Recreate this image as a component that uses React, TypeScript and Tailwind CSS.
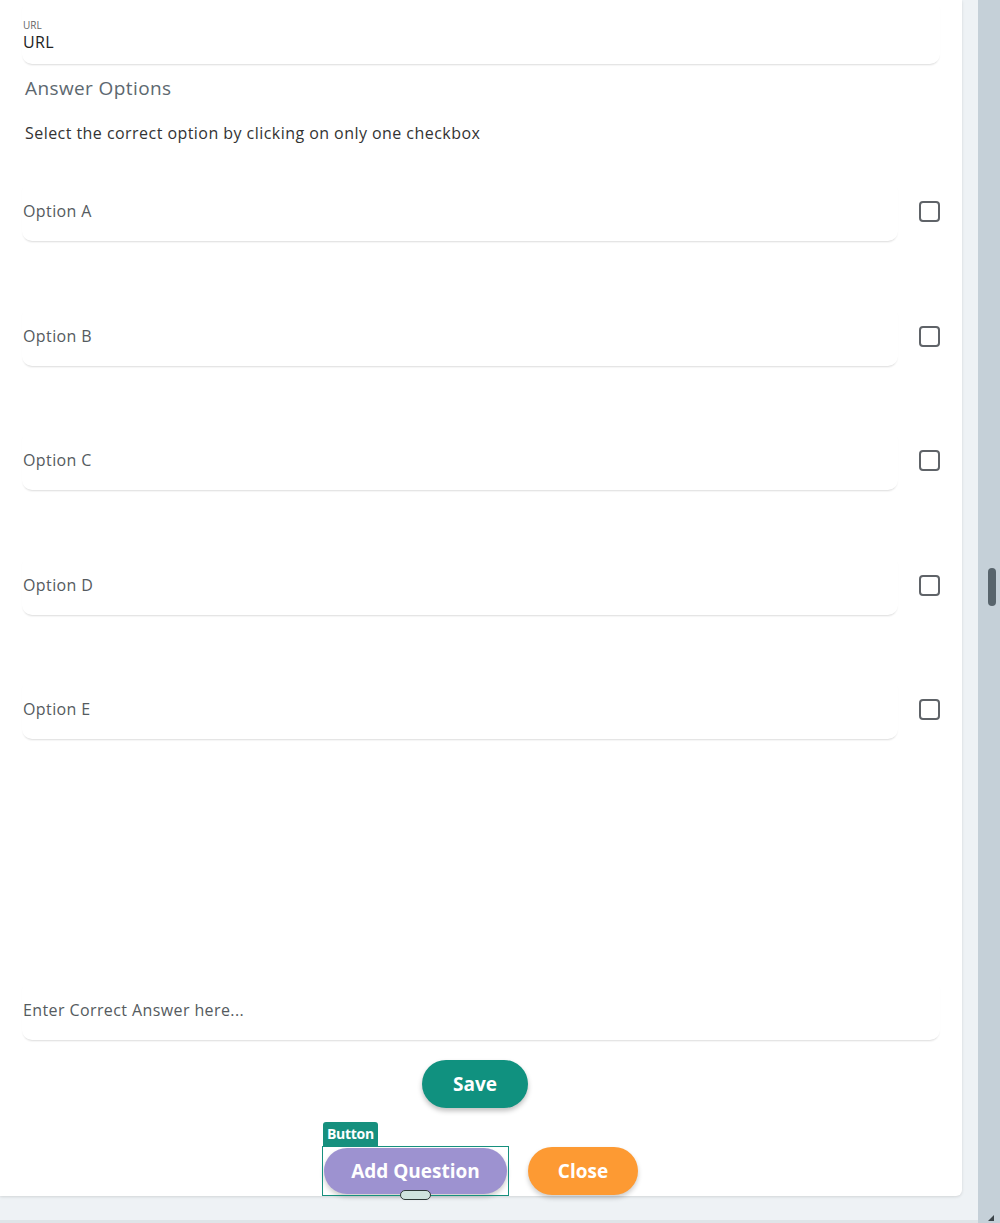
import React from "react";

const font = { fontFamily: '"Open Sans", "Noto Sans", sans-serif' };

function Field({ children, className = "" }: { children: React.ReactNode; className?: string }) {
  return (
    <div
      className={
        "rounded-[10px] bg-white shadow-[0_2px_2px_-1px_rgba(0,0,0,0.14)] " + className
      }
    >
      {children}
    </div>
  );
}

function OptionRow({ label }: { label: string }) {
  return (
    <div className="flex items-center h-[60px]">
      <Field className="w-[878px] h-[60px] flex items-center pl-[1px]">
        <span className="text-[16px] tracking-[0.4px] text-[#555b60]">{label}</span>
      </Field>
      <div className="ml-[21px] mt-[1px] w-[21px] h-[21px] rounded-[4px] border-2 border-[#5f6368]" />
    </div>
  );
}

export default function App() {
  return (
    <div className="w-[1000px] h-[1223px] flex bg-[#eef2f5] overflow-hidden" style={font}>
      <div className="w-[978px] flex flex-col">
        <div className="w-[962px] h-[1196px] bg-white shadow-[0_1px_3px_rgba(0,0,0,0.12)] rounded-br-[6px] flex flex-col pl-[22px] pr-[22px]">
          {/* URL field */}
          <Field className="w-[918px] h-[64px] pt-[19px] pl-[1px]">
            <div className="text-[10px] leading-[12px] text-[#666]">URL</div>
            <div className="text-[16px] leading-[22px] tracking-[0.4px] text-[#222]">URL</div>
          </Field>

          <div className="mt-[12px] h-[24px] leading-[24px] text-[19px] tracking-[0.4px] text-[#5d6870] pl-[3px]">
            Answer Options
          </div>
          <div className="mt-[21px] h-[24px] leading-[24px] text-[16px] tracking-[0.45px] text-[#333] pl-[3px]">
            Select the correct option by clicking on only one checkbox
          </div>

          <div className="mt-[36px] flex flex-col gap-[64.5px]">
            <OptionRow label="Option A" />
            <OptionRow label="Option B" />
            <OptionRow label="Option C" />
            <OptionRow label="Option D" />
            <OptionRow label="Option E" />
          </div>

          <Field className="mt-[241px] w-[918px] h-[60px] flex items-center pl-[1px]">
            <span className="text-[16px] tracking-[0.4px] text-[#555b60]">Enter Correct Answer here...</span>
          </Field>

          <div className="mt-[20px] flex justify-center pr-[12px]">
            <button className="w-[106px] h-[48px] rounded-full bg-[#10917f] text-white text-[19px] font-bold shadow-[0_3px_5px_rgba(0,0,0,0.25)]">
              Save
            </button>
          </div>

          <div className="mt-[39px] flex justify-center gap-[21px] items-center">
            <div className="relative">
              <button className="w-[183px] h-[46px] rounded-full bg-[#9d92d0] text-white text-[19px] font-bold shadow-[0_3px_5px_rgba(0,0,0,0.2)]">
                Add Question
              </button>
              <div className="absolute -left-[2px] -top-[2px] -right-[2px] -bottom-[2px] border border-[#16907e] pointer-events-none" />
              <div className="absolute -left-[1px] -top-[26px] h-[24px] px-[4px] rounded-t-[3px] bg-[#16907e] text-white text-[14px] font-bold leading-[24px] tracking-[-0.3px]">
                Button
              </div>
              <div className="absolute left-[76px] -bottom-[6px] w-[31px] h-[10px] rounded-full bg-[#cfe3de] border border-[#2f3a38]" />
            </div>
            <button className="w-[110px] h-[48px] rounded-full bg-[#fd9a33] text-white text-[19px] font-bold shadow-[0_3px_5px_rgba(0,0,0,0.2)]">
              Close
            </button>
          </div>
        </div>
        <div className="flex-1" />
        <div className="h-[3px] bg-[#dfe4e8]" />
      </div>
      <div className="w-[22px] h-full bg-[#c5d0d8] relative">
        <div className="absolute left-[10px] top-[568px] w-[8px] h-[38px] rounded-full bg-[#58646c]" />
        <div className="absolute left-[10px] bottom-[2px] w-0 h-0 border-l-[6px] border-l-transparent border-b-[6px] border-b-[#3b4348]" />
      </div>
    </div>
  );
}
